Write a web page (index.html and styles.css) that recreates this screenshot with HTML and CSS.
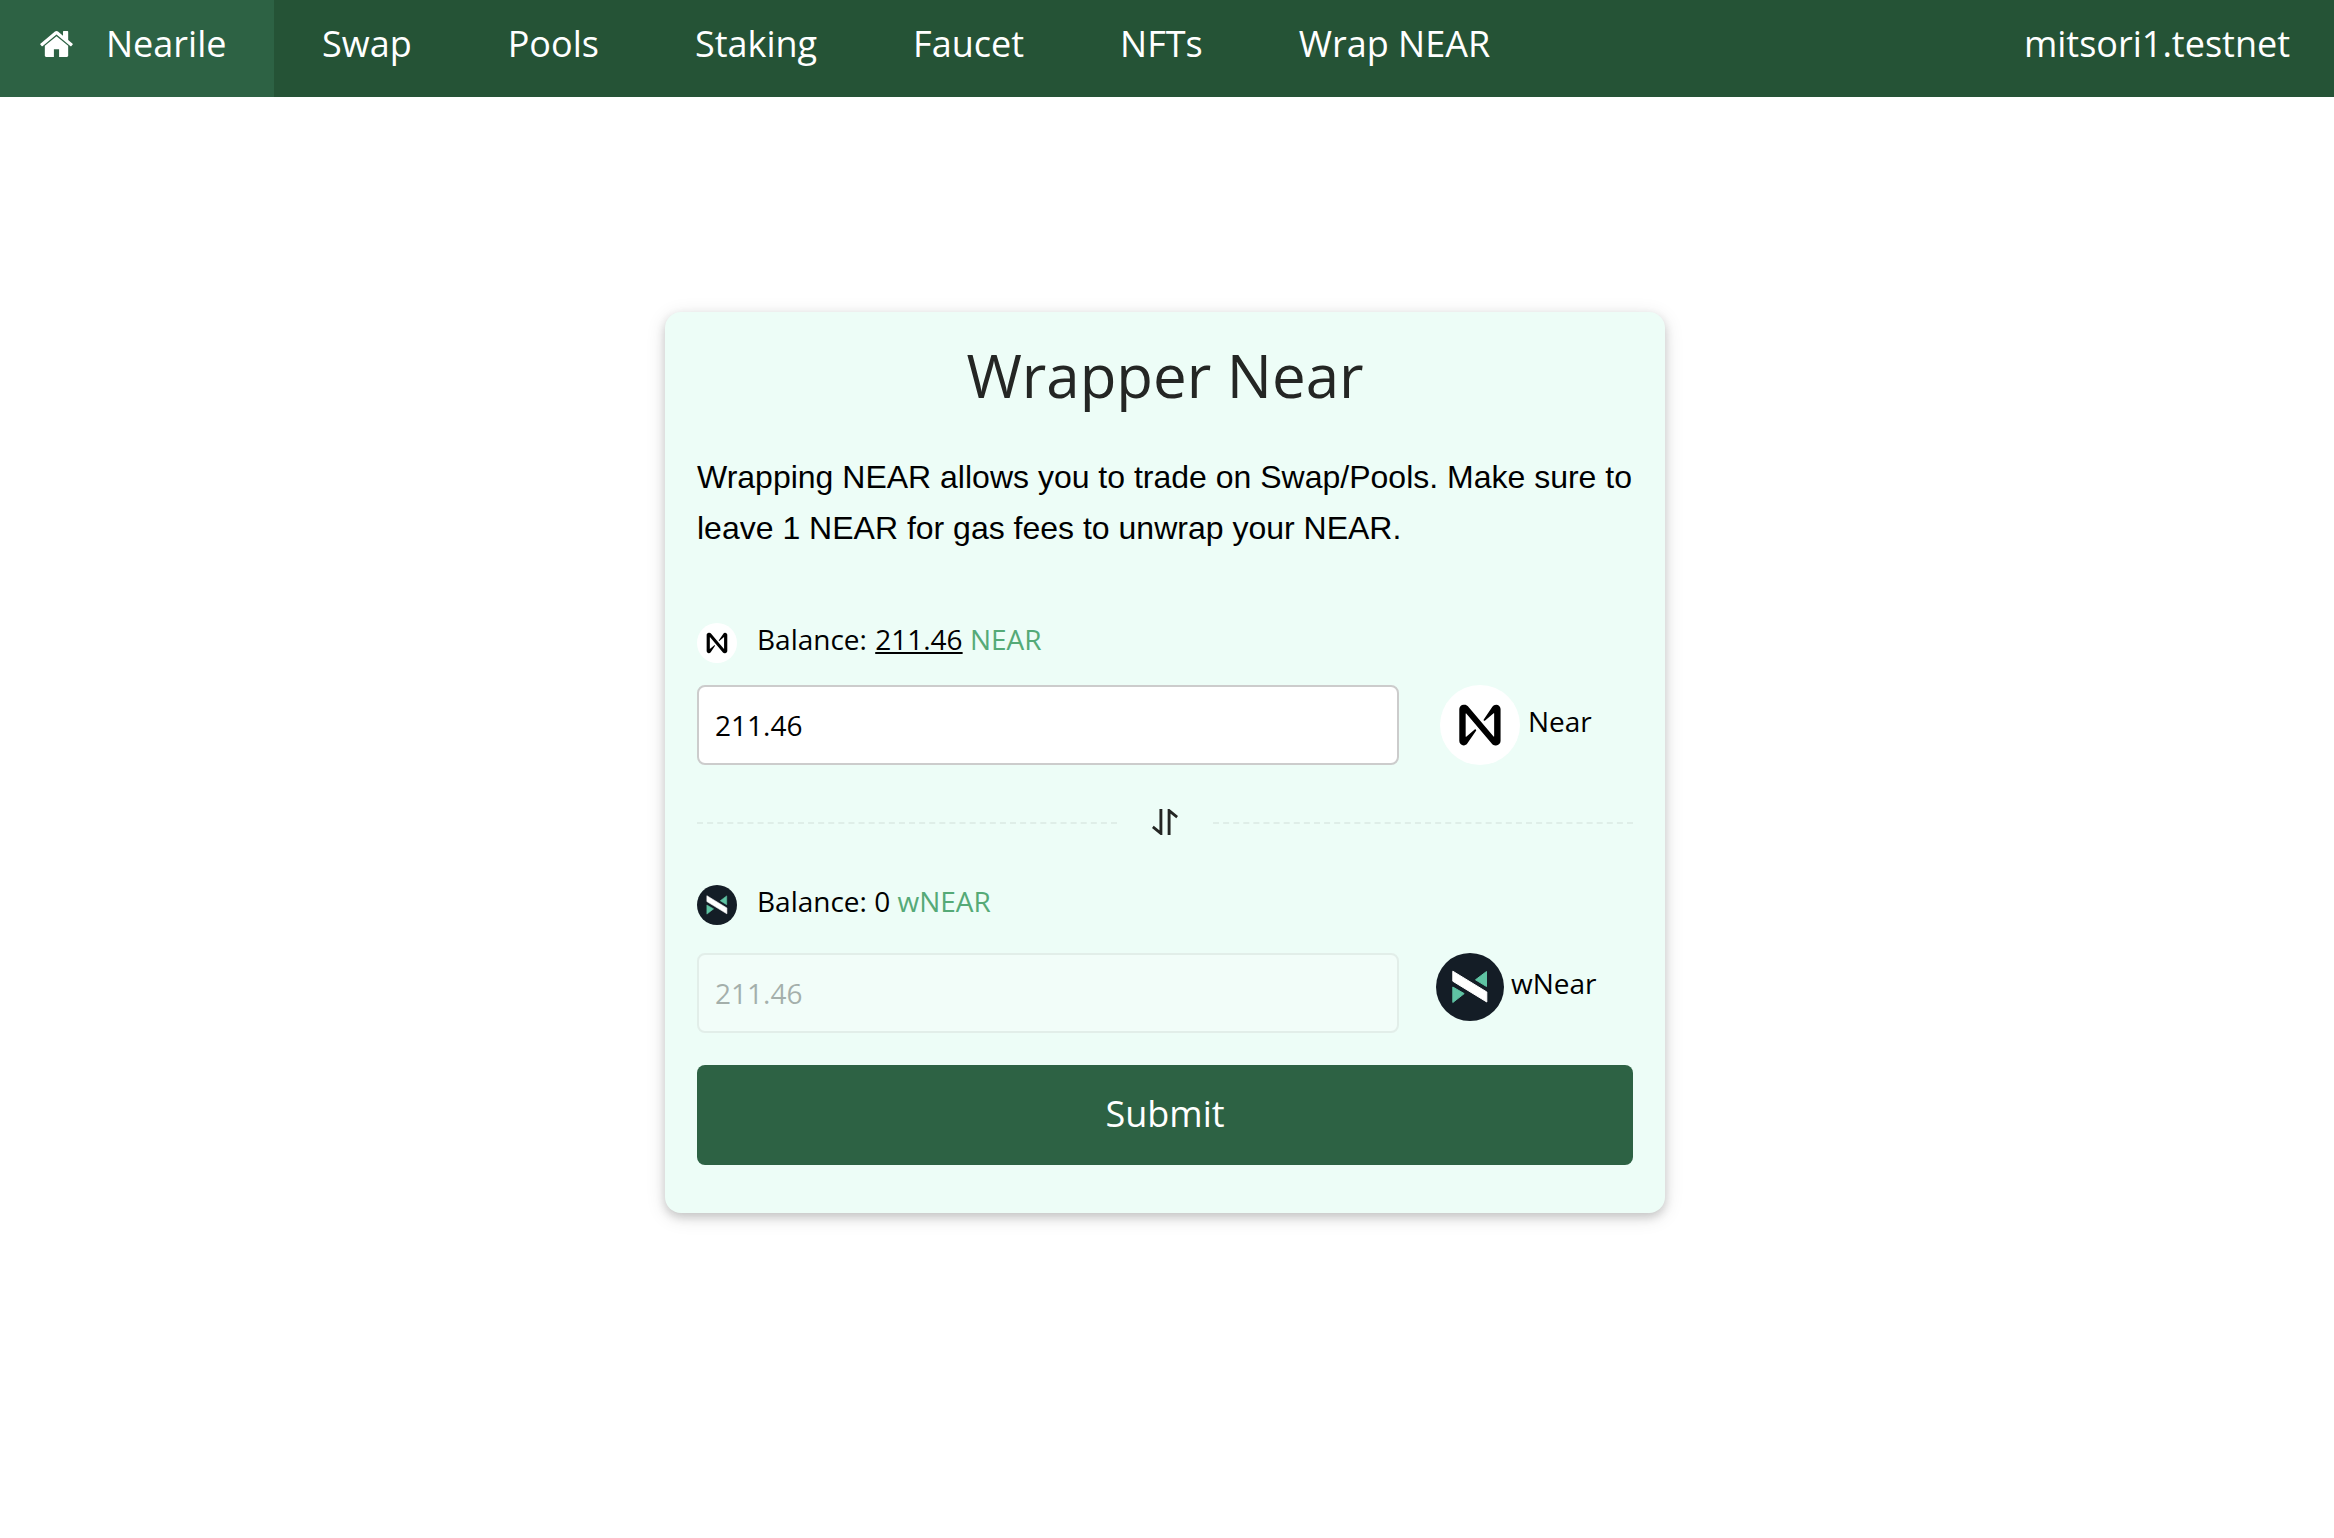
FILE: index.html
```html
<!DOCTYPE html>
<html lang="en">
<head>
<meta charset="utf-8">
<title>Nearile</title>
<link rel="stylesheet" href="styles.css">
</head>
<body>
<svg class="defs" width="0" height="0" aria-hidden="true">
  <symbol id="near" viewBox="0 0 80 80">
    <circle cx="40" cy="40" r="40" fill="#fff"/>
    <path transform="translate(19.3 19.7) scale(.458 .452)" d="M72.2,4.6L53.4,32.5c-1.3,1.9,1.2,4.2,3,2.6L74.9,19c0.5-0.4,1.2-0.1,1.2,0.6v50.3c0,0.7-0.9,1-1.3,0.5l-56-67C17,1.2,14.4,0,11.5,0h-2C4.3,0,0,4.3,0,9.6v70.8C0,85.7,4.3,90,9.6,90c3.3,0,6.4-1.7,8.2-4.6l18.8-27.9c1.3-1.9-1.2-4.2-3-2.6l-18.5,16c-0.5,0.4-1.2,0.1-1.2-0.6V20.1c0-0.7,0.9-1,1.3-0.5l56,67c1.8,2.2,4.5,3.4,7.3,3.4h2c5.3,0,9.6-4.3,9.6-9.6V9.6c0-5.3-4.3-9.6-9.6-9.6C77.1,0,74,1.7,72.2,4.6z"/>
  </symbol>
  <symbol id="wnear" viewBox="0 0 68 68">
    <circle cx="34" cy="34" r="34" fill="#141d26"/>
    <path d="M50.5 18.5V33.5L39.5 26.8ZM16.8 34V49.5L28.2 40.6Z" fill="#5fc3a3" stroke="#5fc3a3" stroke-linejoin="round"/>
    <path d="M16.8 18.2L50.8 39V49L16.8 28.2Z" fill="#fff" stroke="#fff" stroke-linejoin="round"/>
  </symbol>
</svg>
<nav class="nav">
  <a class="nav-item home">
    <svg class="home-icon" viewBox="25 253 1614 1283" fill="#fff"><path d="M1408 992v480q0 26-19 45t-45 19H960v-384H704v384H320q-26 0-45-19t-19-45V992q0-1 .5-3t.5-3l575-474 575 474q1 2 1 6zm223-69l-62 74q-8 9-21 11h-3q-13 0-21-7L832 424 140 1001q-12 8-24 7-13-2-21-11l-62-74q-8-10-7-23.5t11-21.5l719-599q32-26 76-26t76 26l244 204V288q0-14 9-23t23-9h192q14 0 23 9t9 23v408l219 182q10 8 11 21.5t-7 23.5z"/></svg>
    <span>Nearile</span>
  </a>
  <a class="nav-item">Swap</a>
  <a class="nav-item">Pools</a>
  <a class="nav-item">Staking</a>
  <a class="nav-item">Faucet</a>
  <a class="nav-item">NFTs</a>
  <a class="nav-item">Wrap NEAR</a>
  <a class="nav-item account">mitsori1.testnet</a>
</nav>
<main class="page">
  <section class="card">
    <h1 class="title">Wrapper Near</h1>
    <p class="intro">Wrapping NEAR allows you to trade on Swap/Pools. Make sure to leave 1 NEAR for gas fees to unwrap your NEAR.</p>
    <div class="balance">
      <svg class="coin-small"><use href="#near"/></svg>
      <span>Balance: <u class="max">211.46</u> <span class="unit">NEAR</span></span>
    </div>
    <div class="row">
      <input class="amount" type="text" value="211.46">
      <div class="token"><svg class="coin-near"><use href="#near"/></svg><span>Near</span></div>
    </div>
    <div class="divider">
      <svg class="swap-icon" viewBox="0 0 26 26" fill="none" stroke="#242624" stroke-width="2.9"><path d="M8.9 0V24.4L.8 17.9M17.1 26V1.6L25.2 8.1"/></svg>
    </div>
    <div class="balance wrapped">
      <svg class="coin-small"><use href="#wnear"/></svg>
      <span>Balance: 0 <span class="unit">wNEAR</span></span>
    </div>
    <div class="row">
      <input class="amount" type="text" value="211.46" disabled>
      <div class="token token-wnear"><svg class="coin-wnear"><use href="#wnear"/></svg><span>wNear</span></div>
    </div>
    <button class="submit" type="button">Submit</button>
  </section>
</main>
</body>
</html>
```
FILE: styles.css
```css
* { box-sizing: border-box; }
body {
  margin: 0;
  min-height: 100vh;
  background: #fff;
  color: #000;
  font-family: "Open Sans", "Noto Sans", sans-serif;
  font-size: 28px;
}
.defs { display: block; height: 0; }
.nav {
  display: flex;
  height: 97px;
  background: #255336;
  color: #fff;
  font-size: 36px;
  line-height: 54px;
}
.nav-item { padding: 17px 48px 0; white-space: nowrap; }
.home {
  display: flex;
  width: 274px;
  padding: 17px 0 0 40px;
  background: #2d6244;
}
.home-icon { width: 33px; height: 26px; margin: 14px 33px 0 0; }
.account { margin-left: auto; padding-right: 44px; }
.page { padding: 215px 4px 48px 0; }
.card {
  width: 1000px;
  height: 901px;
  margin: 0 auto;
  padding: 32px;
  border-radius: 16px;
  background: #edfdf7;
  box-shadow: 0 4px 10px rgba(0, 0, 0, .16), 0 4px 20px rgba(0, 0, 0, .12);
}
.title {
  margin: 0;
  color: #242624;
  font-size: 60px;
  font-weight: 400;
  line-height: 62px;
  text-align: center;
}
.intro {
  height: 102px;
  margin: 46px -20px 0 0;
  padding-right: 20px;
  font-family: "Liberation Sans", Arial, sans-serif;
  font-size: 32px;
  line-height: 51px;
}
.balance {
  display: flex;
  height: 40px;
  margin-top: 69px;
  line-height: 32px;
}
.coin-small { width: 40px; height: 40px; margin-right: 20px; }
.max {
  margin-left: 1px;
  text-decoration-thickness: 2px;
  text-underline-offset: 2px;
  text-decoration-skip-ink: none;
}
.unit { color: #55aa77; }
.row { display: flex; margin-top: 22px; }
.amount {
  width: 702px;
  height: 80px;
  padding: 0 16px;
  border: 2px solid #ccc;
  border-radius: 8px;
  background: #fff;
  color: #000;
  font: inherit;
}
.amount:disabled { opacity: .3; }
.token { display: flex; margin-left: 41px; line-height: 72px; }
.token-wnear { margin-left: 37px; line-height: 60px; }
.coin-near { width: 80px; height: 80px; margin-right: 8px; }
.coin-wnear { width: 68px; height: 68px; margin-right: 7px; }
.divider {
  display: flex;
  align-items: center;
  height: 26px;
  margin-top: 44px;
}
.divider::before, .divider::after {
  content: "";
  flex: 1;
  height: 2px;
  margin-top: 3px;
  border-top: 2px dashed #dfeee8;
}
.swap-icon { width: 26px; height: 26px; margin: 0 35px; }
.wrapped { margin: 50px 0 28px; }
.wrapped + .row { margin-top: 0; }
.submit {
  display: block;
  width: 936px;
  height: 100px;
  margin-top: 32px;
  padding: 0 0 3px;
  border: 0;
  border-radius: 8px;
  background: #2d6244;
  color: #fff;
  font: 36px "Open Sans", "Noto Sans", sans-serif;
}
```
